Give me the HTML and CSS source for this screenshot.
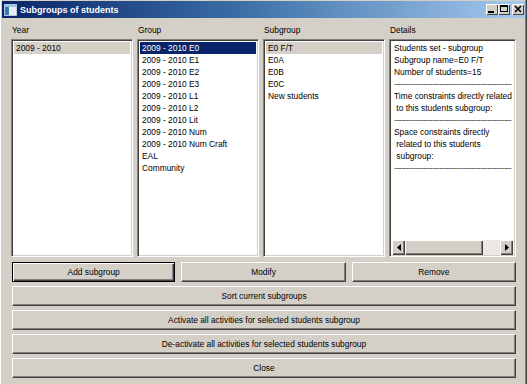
FILE: index.html
```html
<!DOCTYPE html>
<html>
<head>
<meta charset="utf-8">
<link rel="stylesheet" href="styles.css">
</head>
<body>
<div class="window">
  <div class="titlebar">
    <svg class="appicon" width="13" height="12" viewBox="0 0 13 12">
      <rect x="0" y="0" width="13" height="12" fill="#e8eef6"/>
      <rect x="0" y="0" width="13" height="12" fill="none" stroke="#7fa6c8" stroke-width="1"/>
      <rect x="1" y="3" width="4" height="8" fill="#2e7fa8"/>
      <rect x="1" y="1" width="11" height="2" fill="#9cc2de"/>
    </svg>
    <span class="title">Subgroups of students</span>
    <div class="tbtns">
      <div class="tbtn"><svg width="12" height="11" viewBox="0 0 12 11"><rect x="2" y="7" width="6" height="2" fill="#000"/></svg></div>
      <div class="tbtn"><svg width="12" height="11" viewBox="0 0 12 11"><rect x="2.5" y="1.5" width="7" height="6" fill="none" stroke="#000"/><rect x="2" y="1" width="8" height="2" fill="#000"/></svg></div>
      <div class="tbtn close"><svg width="12" height="11" viewBox="0 0 12 11"><path d="M3 2 L9 8 M9 2 L3 8" stroke="#000" stroke-width="1.6"/></svg></div>
    </div>
  </div>
  <div class="client">
    <div class="columns">
      <div class="col">
        <div class="label">Year</div>
        <div class="list">
          <div class="item sel-grey">2009 - 2010</div>
        </div>
      </div>
      <div class="col">
        <div class="label">Group</div>
        <div class="list">
          <div class="item sel-blue">2009 - 2010 E0</div>
          <div class="item">2009 - 2010 E1</div>
          <div class="item">2009 - 2010 E2</div>
          <div class="item">2009 - 2010 E3</div>
          <div class="item">2009 - 2010 L1</div>
          <div class="item">2009 - 2010 L2</div>
          <div class="item">2009 - 2010 Lit</div>
          <div class="item">2009 - 2010 Num</div>
          <div class="item">2009 - 2010 Num Craft</div>
          <div class="item">EAL</div>
          <div class="item">Community</div>
        </div>
      </div>
      <div class="col">
        <div class="label">Subgroup</div>
        <div class="list">
          <div class="item sel-grey">E0 F/T</div>
          <div class="item">E0A</div>
          <div class="item">E0B</div>
          <div class="item">E0C</div>
          <div class="item">New students</div>
        </div>
      </div>
      <div class="col">
        <div class="label">Details</div>
        <div class="list details">
          <div class="text">
            <div class="line">Students set - subgroup</div>
            <div class="line">Subgroup name=E0 F/T</div>
            <div class="line">Number of students=15</div>
            <div class="line dash">-------------------------------------------------</div>
            <div class="line">Time constraints directly related</div>
            <div class="line"> to this students subgroup:</div>
            <div class="line dash">-------------------------------------------------</div>
            <div class="line">Space constraints directly</div>
            <div class="line"> related to this students</div>
            <div class="line"> subgroup:</div>
            <div class="line dash">-------------------------------------------------</div>
          </div>
          <div class="hscroll">
            <div class="arrow"><svg width="4" height="7" viewBox="0 0 4 7"><path d="M4 0 L0 3.5 L4 7 Z" fill="#000"/></svg></div>
            <div class="thumb"></div>
            <div class="track"></div>
            <div class="arrow"><svg width="4" height="7" viewBox="0 0 4 7"><path d="M0 0 L4 3.5 L0 7 Z" fill="#000"/></svg></div>
          </div>
        </div>
      </div>
    </div>
    <div class="btnrow">
      <div class="btn default">Add subgroup</div>
      <div class="btn">Modify</div>
      <div class="btn">Remove</div>
    </div>
    <div class="btn">Sort current subgroups</div>
    <div class="btn">Activate all activities for selected students subgroup</div>
    <div class="btn">De-activate all activities for selected students subgroup</div>
    <div class="btn">Close</div>
  </div>
</div>
</body>
</html>
```

FILE: styles.css
```css
html, body {
  margin: 0;
  padding: 0;
  background: #d4d0c8;
}
body {
  font-family: "Liberation Sans", Arial, sans-serif;
  font-size: 8.4px;
  color: #000;
}
.window {
  width: 527px;
  height: 384px;
  box-sizing: border-box;
  background: #d4d0c8;
  overflow: hidden;
  box-shadow: inset 1px 0 #fff, inset -1px 0 #404040, inset -2px 0 #808080;
}
.titlebar {
  height: 17px;
  margin: 1px 2px 0 2px;
  background: linear-gradient(to right, #0a246a 0%, #3a6ea5 45%, #a6caf0 100%);
  display: flex;
  align-items: center;
  padding-left: 2px;
}
.appicon {
  flex: none;
  margin-right: 3px;
}
.title {
  color: #fff;
  font-weight: bold;
  font-size: 9px;
  flex: 1;
}
.tbtns {
  display: flex;
  align-items: center;
  margin-right: 1px;
}
.tbtn {
  width: 12px;
  height: 11px;
  box-sizing: border-box;
  background: #d4d0c8;
  box-shadow: inset 1px 1px #fff, inset -1px -1px #404040;
  display: flex;
}
.tbtn.close {
  margin-left: 2px;
}
.client {
  padding: 6px 11px 0 11px;
}
.columns {
  display: grid;
  grid-template-columns: 122px 122px 122px minmax(0, 1fr);
  column-gap: 4px;
}
.col {
  display: flex;
  flex-direction: column;
  min-width: 0;
}
.label {
  height: 12px;
  line-height: 12px;
  padding-left: 1px;
  margin-bottom: 3px;
}
.list {
  height: 218px;
  box-sizing: border-box;
  background: #fff;
  border: 1px solid;
  border-color: #808080 #fff #fff #808080;
  box-shadow: inset 1px 1px #404040, inset -1px -1px #d4d0c8;
  padding: 2px 2px;
  overflow: hidden;
}
.item {
  height: 12px;
  line-height: 12px;
  padding-left: 2px;
  white-space: nowrap;
}
.sel-grey {
  background: #d4d0c8;
}
.sel-blue {
  background: #0a246a;
  color: #fff;
}
.details {
  display: flex;
  flex-direction: column;
  padding: 2px 2px 1px 2px;
}
.text {
  flex: 1;
  padding-left: 2px;
  overflow: hidden;
}
.line {
  height: 12px;
  line-height: 12px;
  white-space: pre;
  overflow: hidden;
}
.line.dash {
  letter-spacing: -0.4px;
  color: #333;
}
.hscroll {
  height: 15px;
  display: flex;
  background: #ece9e4;
}
.arrow, .thumb {
  background: #d4d0c8;
  box-sizing: border-box;
  box-shadow: inset 1px 1px #fff, inset -1px -1px #404040, inset -2px -2px #808080;
  display: flex;
  align-items: center;
  justify-content: center;
}
.arrow {
  width: 13px;
}
.thumb {
  width: 78px;
}
.track {
  flex: 1;
}
.btnrow {
  display: grid;
  grid-template-columns: 1fr 1fr 1fr;
  column-gap: 6px;
  margin-top: 5px;
}
.btn {
  height: 20px;
  box-sizing: border-box;
  background: #d4d0c8;
  border: 1px solid;
  border-color: #fff #404040 #404040 #fff;
  box-shadow: inset -1px -1px #808080;
  display: flex;
  align-items: center;
  justify-content: center;
  margin-top: 4px;
  margin-left: 1px;
}
.btnrow .btn {
  margin-top: 0;
  margin-left: 0;
}
.btnrow .btn:first-child {
  margin-left: 1px;
}
.btn.default {
  border-color: #000;
  box-shadow: inset 1px 1px #fff, inset -1px -1px #404040, inset -2px -2px #808080;
}
```
